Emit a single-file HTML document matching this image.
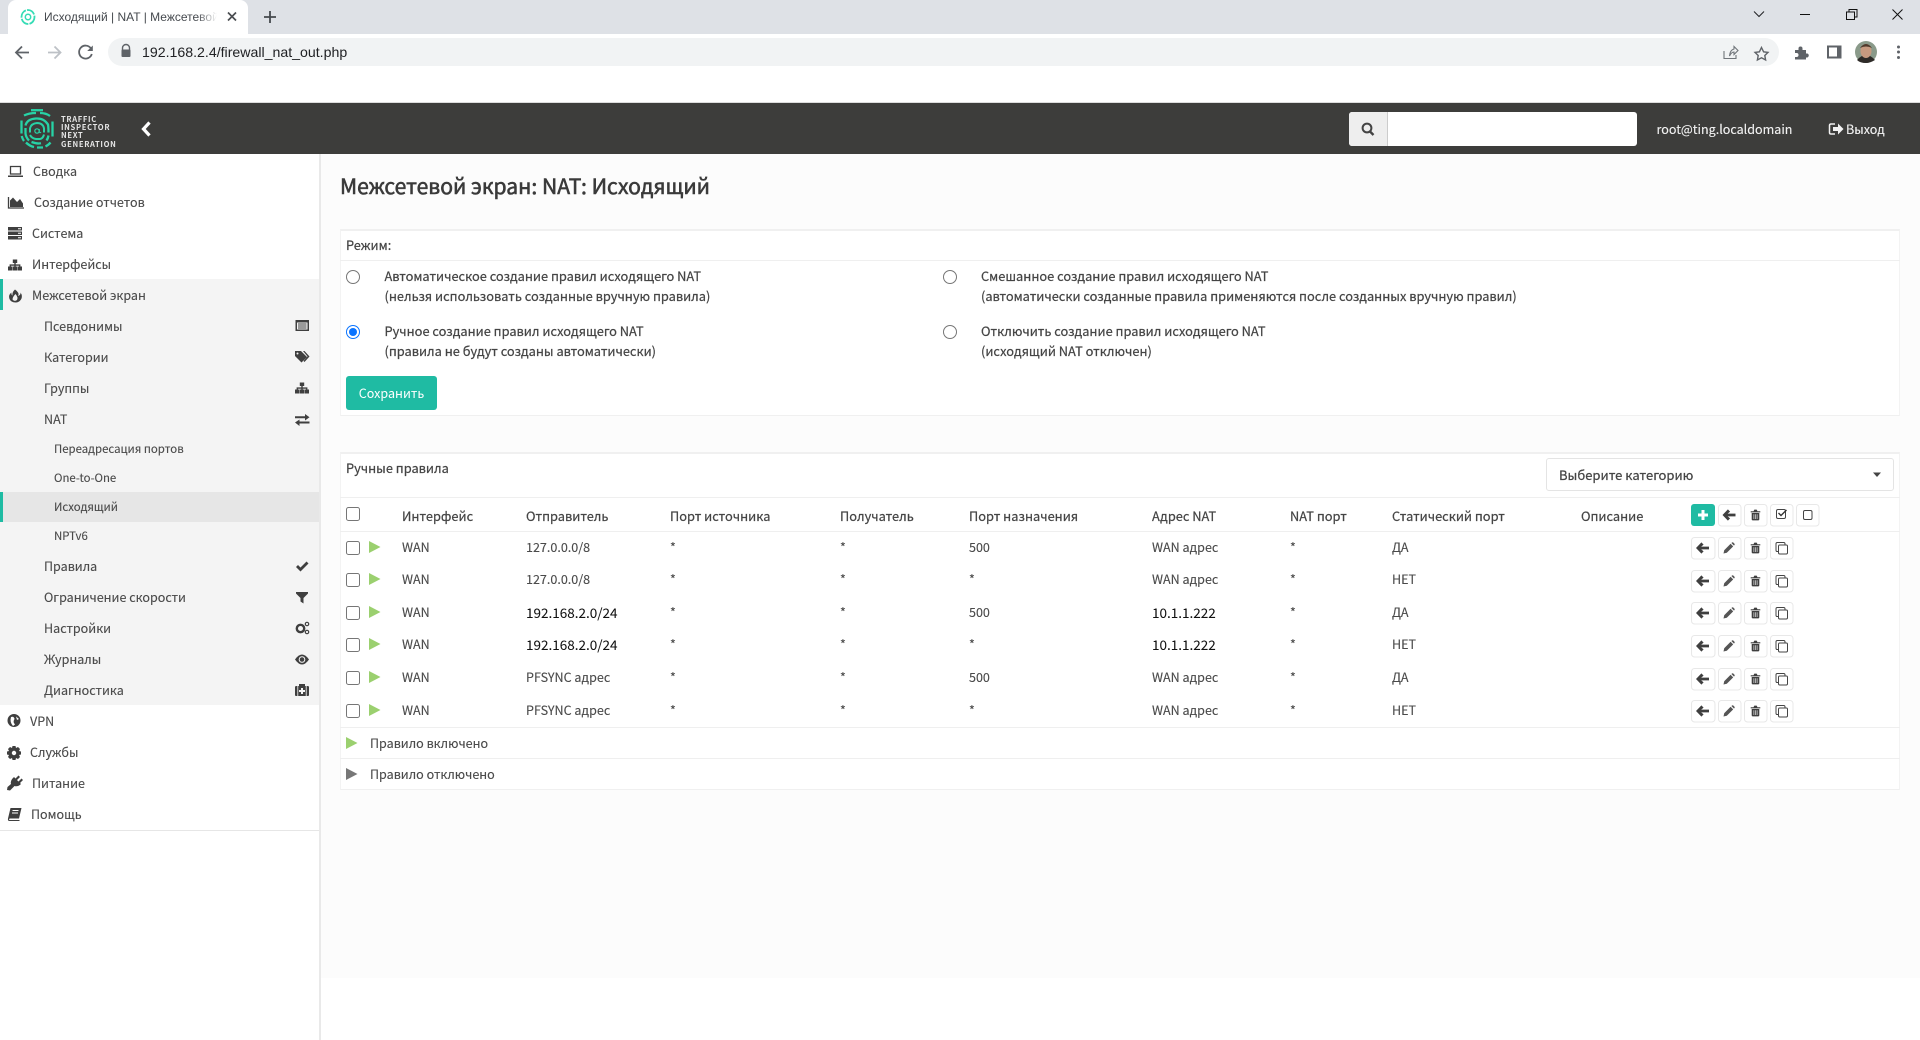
<!DOCTYPE html>
<html lang="ru"><head><meta charset="utf-8"><title>Исходящий | NAT | Межсетевой экран</title>
<style>
html,body{margin:0;padding:0;width:1920px;height:1040px;overflow:hidden;background:#fff}
body{position:relative;font-family:"Noto Sans CJK SC","Liberation Sans",sans-serif;font-size:12.55px;color:#4a4a4a;-webkit-text-stroke:.12px}
.b{position:absolute}
.t{position:absolute;white-space:nowrap;line-height:20px;height:20px}
.c{font-family:"Liberation Sans",sans-serif;-webkit-text-stroke:0}
.k{color:#111;font-size:13.5px;-webkit-text-stroke:.05px}
.h{color:#444;font-size:12.82px;-webkit-text-stroke:.22px}
.cb{position:absolute;width:12px;height:12px;border:1px solid #767676;border-radius:2.5px;background:#fff;left:346px}
.rd{position:absolute;width:12px;height:12px;border:1px solid #767676;border-radius:50%;background:#fff}
svg{position:absolute;left:0;top:0}
</style></head><body>
<!-- browser chrome -->
<div class="b" style="left:0;top:0;width:1920px;height:34px;background:#dee1e6"></div>
<div class="b" style="left:8px;top:0;width:240px;height:34px;background:#fff;border-radius:8px 8px 0 0"></div>
<div class="t c" style="left:44px;top:7px;width:173px;overflow:hidden;font-size:12px;color:#45494e">Исходящий | NAT | Межсетевой экран</div>
<div class="b" style="left:197px;top:8px;width:20px;height:18px;background:linear-gradient(90deg,rgba(255,255,255,0),#fff)"></div>
<div class="b" style="left:108px;top:38px;width:1671px;height:28px;border-radius:14px;background:#f1f3f4"></div>
<div class="t c" style="left:142px;top:42px;font-size:14.15px;color:#202124">192.168.2.4/firewall_nat_out.php</div>
<!-- header -->
<div class="b" style="left:0;top:102px;width:1920px;height:1px;background:#dcdcdc"></div>
<div class="b" style="left:0;top:103px;width:1920px;height:51px;background:#3d3d3b"></div>
<div class="t" style="left:61px;top:115.5px;font-size:7.6px;line-height:8.4px;letter-spacing:.68px;color:#e6e6e6;font-weight:700;height:auto;-webkit-text-stroke:0">TRAFFIC<br>INSPECTOR<br>NEXT<br>GENERATION</div>
<div class="b" style="left:1349px;top:112px;width:288px;height:34px;background:#fff;border-radius:3px"></div>
<div class="b" style="left:1349px;top:112px;width:39px;height:34px;background:#eee;border-radius:3px 0 0 3px;border-right:1px solid #ccc;box-sizing:border-box"></div>
<div class="t" style="left:1656.5px;top:119px;color:#f2f2f2">root@ting.localdomain</div>
<div class="t" style="left:1846px;top:119px;color:#f2f2f2">Выход</div>
<!-- sidebar -->
<div class="b" style="left:0;top:154px;width:319px;height:886px;background:#fff"></div>
<div class="b" style="left:319px;top:154px;width:2px;height:886px;background:#e9e9e9"></div>
<div class="b" style="left:321px;top:154px;width:1599px;height:824px;background:#fcfcfc"></div>
<div class="b" style="left:0;top:279px;width:319px;height:426px;background:#f4f4f4"></div>
<div class="b" style="left:0;top:279px;width:3px;height:31px;background:#1fbba3"></div>
<div class="b" style="left:0;top:492px;width:319px;height:30px;background:#e6e6e6"></div>
<div class="b" style="left:0;top:492px;width:3px;height:30px;background:#1fbba3"></div>
<div class="b" style="left:0;top:830px;width:319px;height:1px;background:#e6e6e6"></div>
<div class="t" style="left:33px;top:161px">Сводка</div>
<div class="t" style="left:34px;top:192px">Создание отчетов</div>
<div class="t" style="left:32px;top:223px">Система</div>
<div class="t" style="left:32px;top:254px">Интерфейсы</div>
<div class="t" style="left:32px;top:285px">Межсетевой экран</div>
<div class="t" style="left:44px;top:316px">Псевдонимы</div>
<div class="t" style="left:44px;top:347px">Категории</div>
<div class="t" style="left:44px;top:378px">Группы</div>
<div class="t" style="left:44px;top:409px">NAT</div>
<div class="t" style="left:54px;top:439px;font-size:11.4px">Переадресация портов</div>
<div class="t" style="left:54px;top:468px;font-size:11.4px">One-to-One</div>
<div class="t" style="left:54px;top:497px;font-size:11.4px">Исходящий</div>
<div class="t" style="left:54px;top:526px;font-size:11.4px">NPTv6</div>
<div class="t" style="left:44px;top:556px">Правила</div>
<div class="t" style="left:44px;top:587px">Ограничение скорости</div>
<div class="t" style="left:44px;top:618px">Настройки</div>
<div class="t" style="left:44px;top:649px">Журналы</div>
<div class="t" style="left:44px;top:680px">Диагностика</div>
<div class="t" style="left:30px;top:711px">VPN</div>
<div class="t" style="left:30px;top:742px">Службы</div>
<div class="t" style="left:32px;top:773px">Питание</div>
<div class="t" style="left:31px;top:804px">Помощь</div>
<!-- main -->
<div class="t" style="left:340px;top:174px;font-size:21.1px;line-height:24px;height:24px;color:#3a3a3a;-webkit-text-stroke:.6px">Межсетевой экран: NAT: Исходящий</div>
<div class="b" style="left:340px;top:229px;width:1560px;height:187px;background:#fff;border-top:2px solid #f0f0f0;border-left:1px solid #f3f3f3;border-right:1px solid #f3f3f3;border-bottom:1px solid #f0f0f0;box-sizing:border-box"></div>
<div class="b" style="left:340px;top:260px;width:1560px;height:1px;background:#efefef"></div>
<div class="t h" style="left:346px;top:235px">Режим:</div>
<div class="rd" style="left:346px;top:269.5px"></div>
<div class="rd" style="left:943px;top:269.5px"></div>
<div class="rd" style="left:943px;top:324.5px"></div>
<div class="b" style="left:346px;top:325px;width:12px;height:12px;border:1px solid #0b74ff;border-radius:50%;background:#fff"></div>
<div class="b" style="left:349px;top:328px;width:8px;height:8px;border-radius:50%;background:#0b74ff"></div>
<div class="t h" style="left:384.5px;top:266px">Автоматическое создание правил исходящего NAT</div>
<div class="t h" style="left:384.5px;top:286px">(нельзя использовать созданные вручную правила)</div>
<div class="t h" style="left:384.5px;top:321px">Ручное создание правил исходящего NAT</div>
<div class="t h" style="left:384.5px;top:341px">(правила не будут созданы автоматически)</div>
<div class="t h" style="left:981px;top:266px">Смешанное создание правил исходящего NAT</div>
<div class="t h" style="left:981px;top:286px">(автоматически созданные правила применяются после созданных вручную правил)</div>
<div class="t h" style="left:981px;top:321px">Отключить создание правил исходящего NAT</div>
<div class="t h" style="left:981px;top:341px">(исходящий NAT отключен)</div>
<div class="b" style="left:346px;top:376px;width:91px;height:34px;background:#1fbba3;border-radius:3px"></div>
<div class="t" style="left:346px;top:383px;width:91px;text-align:center;color:#fff;-webkit-text-stroke:0">Сохранить</div>

<div class="b" style="left:340px;top:452px;width:1560px;height:338px;background:#fff;border-top:2px solid #f0f0f0;border-left:1px solid #f3f3f3;border-right:1px solid #f3f3f3;border-bottom:1px solid #f0f0f0;box-sizing:border-box"></div>
<div class="b" style="left:340px;top:497px;width:1560px;height:1px;background:#efefef"></div>
<div class="b" style="left:340px;top:531px;width:1560px;height:1px;background:#efefef"></div>
<div class="b" style="left:340px;top:727px;width:1560px;height:1px;background:#efefef"></div>
<div class="b" style="left:340px;top:758px;width:1560px;height:1px;background:#efefef"></div>
<div class="t h" style="left:346px;top:458px">Ручные правила</div>
<div class="b" style="left:1546px;top:458px;width:348px;height:33px;box-sizing:border-box;background:#fff;border:1px solid #e4e4e4;border-radius:3px"></div>
<div class="t h" style="left:1559px;top:465px;font-size:13px">Выберите категорию</div>

<div class="cb" style="top:507px;left:345.5px"></div>
<div class="t h" style="left:402px;top:506px">Интерфейс</div>
<div class="t h" style="left:526px;top:506px">Отправитель</div>
<div class="t h" style="left:670px;top:506px">Порт источника</div>
<div class="t h" style="left:840px;top:506px">Получатель</div>
<div class="t h" style="left:969px;top:506px">Порт назначения</div>
<div class="t h" style="left:1152px;top:506px">Адрес NAT</div>
<div class="t h" style="left:1290px;top:506px">NAT порт</div>
<div class="t h" style="left:1392px;top:506px">Статический порт</div>
<div class="t h" style="left:1581px;top:506px">Описание</div>

<div class="cb" style="top:541px"></div><div class="t" style="left:402px;top:537px">WAN</div><div class="t" style="left:526px;top:537px">127.0.0.0/8</div><div class="t" style="left:670px;top:537px">*</div><div class="t" style="left:840px;top:537px">*</div><div class="t" style="left:969px;top:537px">500</div><div class="t" style="left:1152px;top:537px">WAN адрес</div><div class="t" style="left:1290px;top:537px">*</div><div class="t" style="left:1392px;top:537px">ДА</div>
<div class="cb" style="top:573px"></div><div class="t" style="left:402px;top:569px">WAN</div><div class="t" style="left:526px;top:569px">127.0.0.0/8</div><div class="t" style="left:670px;top:569px">*</div><div class="t" style="left:840px;top:569px">*</div><div class="t" style="left:969px;top:569px">*</div><div class="t" style="left:1152px;top:569px">WAN адрес</div><div class="t" style="left:1290px;top:569px">*</div><div class="t" style="left:1392px;top:569px">НЕТ</div>
<div class="cb" style="top:606px"></div><div class="t" style="left:402px;top:602px">WAN</div><div class="t k" style="left:526px;top:602px">192.168.2.0/24</div><div class="t" style="left:670px;top:602px">*</div><div class="t" style="left:840px;top:602px">*</div><div class="t" style="left:969px;top:602px">500</div><div class="t k" style="left:1152px;top:602px">10.1.1.222</div><div class="t" style="left:1290px;top:602px">*</div><div class="t" style="left:1392px;top:602px">ДА</div>
<div class="cb" style="top:638px"></div><div class="t" style="left:402px;top:634px">WAN</div><div class="t k" style="left:526px;top:634px">192.168.2.0/24</div><div class="t" style="left:670px;top:634px">*</div><div class="t" style="left:840px;top:634px">*</div><div class="t" style="left:969px;top:634px">*</div><div class="t k" style="left:1152px;top:634px">10.1.1.222</div><div class="t" style="left:1290px;top:634px">*</div><div class="t" style="left:1392px;top:634px">НЕТ</div>
<div class="cb" style="top:671px"></div><div class="t" style="left:402px;top:667px">WAN</div><div class="t" style="left:526px;top:667px">PFSYNC адрес</div><div class="t" style="left:670px;top:667px">*</div><div class="t" style="left:840px;top:667px">*</div><div class="t" style="left:969px;top:667px">500</div><div class="t" style="left:1152px;top:667px">WAN адрес</div><div class="t" style="left:1290px;top:667px">*</div><div class="t" style="left:1392px;top:667px">ДА</div>
<div class="cb" style="top:704px"></div><div class="t" style="left:402px;top:700px">WAN</div><div class="t" style="left:526px;top:700px">PFSYNC адрес</div><div class="t" style="left:670px;top:700px">*</div><div class="t" style="left:840px;top:700px">*</div><div class="t" style="left:969px;top:700px">*</div><div class="t" style="left:1152px;top:700px">WAN адрес</div><div class="t" style="left:1290px;top:700px">*</div><div class="t" style="left:1392px;top:700px">НЕТ</div>
<div class="t" style="left:370px;top:733px">Правило включено</div>
<div class="t" style="left:370px;top:764px">Правило отключено</div>

<!-- icons overlay -->
<svg width="1920" height="1040" viewBox="0 0 1920 1040" xmlns="http://www.w3.org/2000/svg">
<defs>
<g id="back"><path d="M-7 0L-1.6-5.6L.6-3.4L-1.8-1.4H6V1.4H-1.8L.6 3.4L-1.6 5.6Z" fill="#3f3f3f"/></g>
<g id="pen"><path d="M-5.500 5.500L-4.800 2.200L1.600-4.200L4.200-1.600L-2.200 4.800Z M2.400-5L3.200-5.600Q3.800-6 4.400-5.400L5.400-4.400Q6-3.800 5.600-3.200L5-2.400Z" fill="#555"/></g>
<g id="del"><path d="M-4.800-3.800H-2L-1.200-5.400H1.200L2-3.800H4.800V-2.600H-4.800ZM-3.800-2H3.800V4.400Q3.800 5.400 2.800 5.400H-2.800Q-3.800 5.400-3.800 4.400Z" fill="#3f3f3f"/><path d="M-1.600-.8V4M0-.8V4M1.600-.8V4" stroke="#fff" stroke-width=".6"/></g>
<g id="copy" fill="none" stroke="#444" stroke-width="1"><path d="M-2.800 3.500H-4.200Q-5.500 3.500-5.500 2.200V-4.200Q-5.500-5.500-4.200-5.500H2.200Q3.500-5.500 3.500-4.200V-2.800"/><rect x="-3" y="-3" width="9" height="9" rx="1.200"/></g>
<g id="btn"><rect x=".5" y=".5" width="22.500" height="21.500" rx="3" fill="#fff" stroke="#e8e8e8"/></g>
<g id="rowb">
<use href="#btn" transform="translate(1691 0) scale(1.04 1)"/><use href="#back" x="1703" y="11"/>
<use href="#btn" x="1718"/><use href="#pen" x="1729" y="11"/>
<use href="#btn" x="1744"/><use href="#del" x="1755.500" y="11"/>
<use href="#btn" x="1770"/><use href="#copy" x="1781.500" y="11"/>
</g>
<path id="play" d="M0 0L11.500 6L0 12Z"/>
<path id="sitemap" d="M-2.200-5.500H2.200V-2H.7V-.6H5.400V1.500H7V5.500H2.600V1.500H4.100V.7H.7V1.500H2.200V5.500H-2.200V1.500H-.7V.7H-4.100V1.500H-2.600V5.500H-7V1.500H-5.400V-.6H-.7V-2H-2.200Z" fill="#3f3f3f"/>
<g id="logo" fill="none" stroke-linecap="butt" stroke-width="2.300">
<path d="M-6-18.300H6"/>
<path d="M-13-13Q-8-15.500-1-15.500M3-15.500Q9-15.500 13-12.500"/>
<path d="M-15.500-8V5M-15.300 7.500Q-14.500 10.500-13 12.500M-11 14Q-7.500 17.500-3 18.500M0 19H6M8.500 18Q12 16 13.500 14M15.500 8V-7"/>
<path d="M-11.500-3Q-10-9.500-1-10Q7-10.500 11-4Q11.500-1 11.500 4M11.500 7Q11 10 9.500 12M-11.500-.5V5Q-11 9-8 12M-5.500 13.500Q0 15.500 4 14.800"/>
<path d="M-7 4V0Q-6-5 0-5.500Q6-5.500 7 0V4M7 6Q6 10 3 10.500H-1Q-5 10-7 6.500" stroke-width="2"/>
<circle cx="0" cy="2.500" r="2.200" stroke-width="1.200"/><path d="M2.300 .5V3.500Q3 5 4 3.500" stroke-width="1"/>
</g>
</defs>
<!-- favicon -->
<ellipse cx="28" cy="17" rx="6.500" ry="7" fill="none" stroke="#35dcb5" stroke-width="1.800" stroke-dasharray="9 1.200"/>
<circle cx="28" cy="17" r="2.700" fill="none" stroke="#35dcb5" stroke-width="1.500"/>
<!-- tab close, plus -->
<path d="M228 12.500L236 20.500M236 12.500L228 20.500" stroke="#4a4d51" stroke-width="1.700"/>
<path d="M270 11V23M264 17H276" stroke="#45494e" stroke-width="1.800"/>
<!-- nav -->
<path d="M29 52.500H16.500M22 46.500L16 52.500L22 58.500" fill="none" stroke="#5f6368" stroke-width="1.800"/>
<path d="M48 52.500H60M54.500 46.500L60.500 52.500L54.500 58.500" fill="none" stroke="#bdc1c6" stroke-width="1.800"/>
<path d="M91.800 54A6.500 6.500 0 1 1 90.800 48.200" fill="none" stroke="#5f6368" stroke-width="1.800"/><path d="M92.800 45.500V51H87.200Z" fill="#5f6368"/>
<path d="M122.500 50V48A3.500 3.500 0 0 1 129.500 48V50" fill="none" stroke="#5f6368" stroke-width="1.400"/><rect x="121.500" y="49.500" width="9" height="7.500" rx="1" fill="#5f6368"/>
<!-- right chrome -->
<path d="M1754 11.500L1759 16.500L1764 11.500" fill="none" stroke="#202124" stroke-width="1"/>
<path d="M1800 14.500H1810" stroke="#111" stroke-width="1"/>
<path d="M1846.500 12H1854.500V19.500H1846.500ZM1849 12V9.500H1857V17H1854.500" fill="none" stroke="#111" stroke-width="1"/>
<path d="M1892.500 9.500L1902.500 19.500M1902.500 9.500L1892.500 19.500" stroke="#111" stroke-width="1"/>
<path d="M1724 51V58.500H1736V55" fill="none" stroke="#70757a" stroke-width="1.100"/><path d="M1729.500 56Q1730 50 1734 49V46.500L1738 50.500L1734 54.500V52Q1731.500 52 1729.500 56Z" fill="none" stroke="#70757a" stroke-width="1.100"/>
<path d="M1761.500 47.500L1763.600 51.800L1768 52.400L1764.800 55.500L1765.600 60L1761.500 57.800L1757.400 60L1758.200 55.500L1755 52.400L1759.400 51.800Z" fill="none" stroke="#5f6368" stroke-width="1.400"/>
<path d="M1795 50H1798.500V48.500A2 2 0 0 1 1802.500 48.500V50H1806V53.500H1807.500A2.200 2.200 0 0 1 1807.500 57.500H1806V59.500H1795V57H1796.500A2 2 0 0 0 1796.500 53H1795Z" fill="#5f6368"/>
<rect x="1828" y="46.500" width="12.500" height="11" fill="none" stroke="#5f6368" stroke-width="2" /><rect x="1837" y="46" width="4" height="12.500" fill="#5f6368"/>
<circle cx="1866" cy="52" r="11" fill="#8a9a8a"/><path d="M1857 60Q1866 50 1875 60Q1870 63 1866 63Q1860 63 1857 60Z" fill="#2e2b28"/><ellipse cx="1866" cy="51" rx="5.500" ry="7" fill="#c79a80"/><path d="M1860 48Q1866 40 1872 48Q1866 45 1860 48Z" fill="#4f3a2c"/>
<circle cx="1898.500" cy="47" r="1.500" fill="#5f6368"/><circle cx="1898.500" cy="52" r="1.500" fill="#5f6368"/><circle cx="1898.500" cy="57.500" r="1.500" fill="#5f6368"/>
<!-- header icons -->
<use href="#logo" transform="translate(37 128.500)" stroke="#27d3a6"/>
<path d="M149.500 122.500L143.500 129L149.500 135.500" fill="none" stroke="#fff" stroke-width="3.200"/>
<circle cx="1367" cy="128" r="4.400" fill="none" stroke="#444" stroke-width="2"/><path d="M1370 131.500L1373.500 135" stroke="#444" stroke-width="2.400"/>
<path d="M1835 124H1831Q1829.500 124 1829.500 125.500V132.500Q1829.500 134 1831 134H1835" fill="none" stroke="#f2f2f2" stroke-width="1.500"/><path d="M1833 127H1838V123.500L1843.500 129L1838 134.500V131H1833Z" fill="#f2f2f2"/>
<!-- sidebar icons -->
<g fill="#3f3f3f">
<path d="M10.500 166.500H20.500V174H10.500Z" fill="none" stroke="#3f3f3f" stroke-width="1.300"/><path d="M8 175.500H23V177H8Z"/>
<path d="M8.500 197V208H24" fill="none" stroke="#3f3f3f" stroke-width="1.300"/><path d="M10 207L10 200.500L13 197.500L17 202L20 199L23 203.500V207Z"/>
<path d="M8 227H22V230.500H8ZM8 231.500H22V235H8ZM8 236H22V239.500H8Z"/><path d="M18 228.700H21M18 233.200H21M18 237.700H21" stroke="#fff" stroke-width="1"/>
<use href="#sitemap" transform="translate(15 265)"/>
<path d="M15 289.500Q20 293 18 296Q21 295 20.500 292.500Q23 296 21 299.500Q19 302.500 15.500 302.500Q11 302.500 9.500 299Q8 295 11.500 292.500Q11 294.500 12.500 295.500Q12 292 15 289.500Z"/><path d="M15.500 294Q18.500 297.500 17 300Q14.500 302 12.500 299.500Q12.500 297 15.500 294Z" fill="#f4f4f4"/>
<path d="M295.500 320H309V331H295.500Z"/><path d="M297 322.500H307.500V329.500H297Z" fill="#f4f4f4"/><path d="M298 324H306.500M298 326H306.500M298 328H306.500" stroke="#3f3f3f" stroke-width="1"/>
<path d="M295 351H301L307 357L301.500 362.500L295 356ZM303 351H304.500L309.500 356.500L304.500 362L303.500 361L307.500 356.500Z"/><circle cx="297.500" cy="353.500" r="1" fill="#f4f4f4"/>
<use href="#sitemap" transform="translate(302 388)"/>
<path d="M295 416.300H305V414L309.500 417.200L305 420.500V418.200H295ZM309.500 421.500V423.500H299.500V426L295 422.500L299.500 419.500V421.500Z"/>
<path d="M296 567L298 565L300.500 567.500L306.500 561.500L308.500 563.500L300.500 571.500Z"/>
<path d="M296 592H308V593.500L303.500 598V603.500L300.500 601.500V598L296 593.500Z"/>
<circle cx="300.500" cy="628.500" r="3.700" fill="none" stroke="#3f3f3f" stroke-width="2.400"/><circle cx="307" cy="624" r="1.700" fill="none" stroke="#3f3f3f" stroke-width="1.200"/><circle cx="307" cy="632" r="1.700" fill="none" stroke="#3f3f3f" stroke-width="1.200"/>
<path d="M295 659.500Q298.500 654.500 302 654.500Q305.500 654.500 309 659.500Q305.500 664.500 302 664.500Q298.500 664.500 295 659.500Z"/><circle cx="302" cy="659.500" r="3.300" fill="#f4f4f4"/><circle cx="302" cy="659.500" r="2.300"/>
<path d="M295 687Q295 686 296.500 686H299V684H305V686H307.500Q309 686 309 687V695Q309 696 307.500 696H296.500Q295 696 295 695Z"/><path d="M297.800 686V696M306.200 686V696" stroke="#f4f4f4" stroke-width=".8"/><path d="M301 688H303V690H305V692H303V694H301V692H299V690H301Z" fill="#f4f4f4"/>
<circle cx="14" cy="720.500" r="6.500"/><path d="M11 717Q14 716 14.500 719Q12.500 722 15 724.500L13 726Q9.500 722 11 717ZM16 716.500L19 719L17 720Z" fill="#fff"/>
<path d="M12.500 746H15.500L16 748L18 747L20 749L19 751L21 751.500V754.500L19 755L20 757L18 759L16 758L15.500 760H12.500L12 758L10 759L8 757L9 755L7 754.500V751.500L9 751L8 749L10 747L12 748Z"/><circle cx="14" cy="753" r="2.200" fill="#fff"/>
<path d="M15 777L22 784Q19 787 15.500 786L11 790.500L8 790L8.500 787L12 784Q11 780.500 15 777ZM16.500 778.500L19.500 775.500L21 777L18 780ZM19.500 781.500L22.500 778.500L24 780L21 783Z" transform="translate(-1 0)"/>
<path d="M10.500 808H21.500L19 818.500H10Q9 818.500 9 819.500Q9 820 10 820H19.500V821H9.500Q7.500 821 8 818.500Z"/><path d="M12.500 810.500H18.500M12 813H18" stroke="#fff" stroke-width="1"/>
</g>
<!-- select caret -->
<path d="M1873 472.500H1881L1877 477Z" fill="#444"/>
<!-- play icons -->
<g fill="#9bd06f">
<use href="#play" transform="translate(369 541)"/><use href="#play" transform="translate(369 573)"/><use href="#play" transform="translate(369 606)"/><use href="#play" transform="translate(369 638)"/><use href="#play" transform="translate(369 671)"/><use href="#play" transform="translate(369 704)"/><use href="#play" transform="translate(346 737)"/>
</g>
<use href="#play" transform="translate(346 768)" fill="#777"/>
<!-- header table buttons -->
<rect x="1691" y="504" width="24" height="22" rx="3" fill="#1fbba3"/>
<path d="M1703 510V520M1698 515H1708" stroke="#fff" stroke-width="3"/>
<use href="#btn" x="1718" y="504"/><use href="#back" x="1729.500" y="515"/>
<use href="#btn" x="1744" y="504"/><use href="#del" x="1755.500" y="515"/>
<use href="#btn" x="1770" y="504"/>
<rect x="1776.500" y="509.500" width="9" height="9" rx="1.500" fill="none" stroke="#444"/><path d="M1778.500 513L1781 515.500L1786.500 510" fill="none" stroke="#333" stroke-width="1.400"/>
<use href="#btn" x="1796" y="504"/><rect x="1803.500" y="510.500" width="8.500" height="9" rx="1.500" fill="none" stroke="#444"/>
<!-- row buttons -->
<use href="#rowb" y="537"/><use href="#rowb" y="570"/><use href="#rowb" y="602"/><use href="#rowb" y="635"/><use href="#rowb" y="668"/><use href="#rowb" y="700"/>
</svg>
</body></html>
